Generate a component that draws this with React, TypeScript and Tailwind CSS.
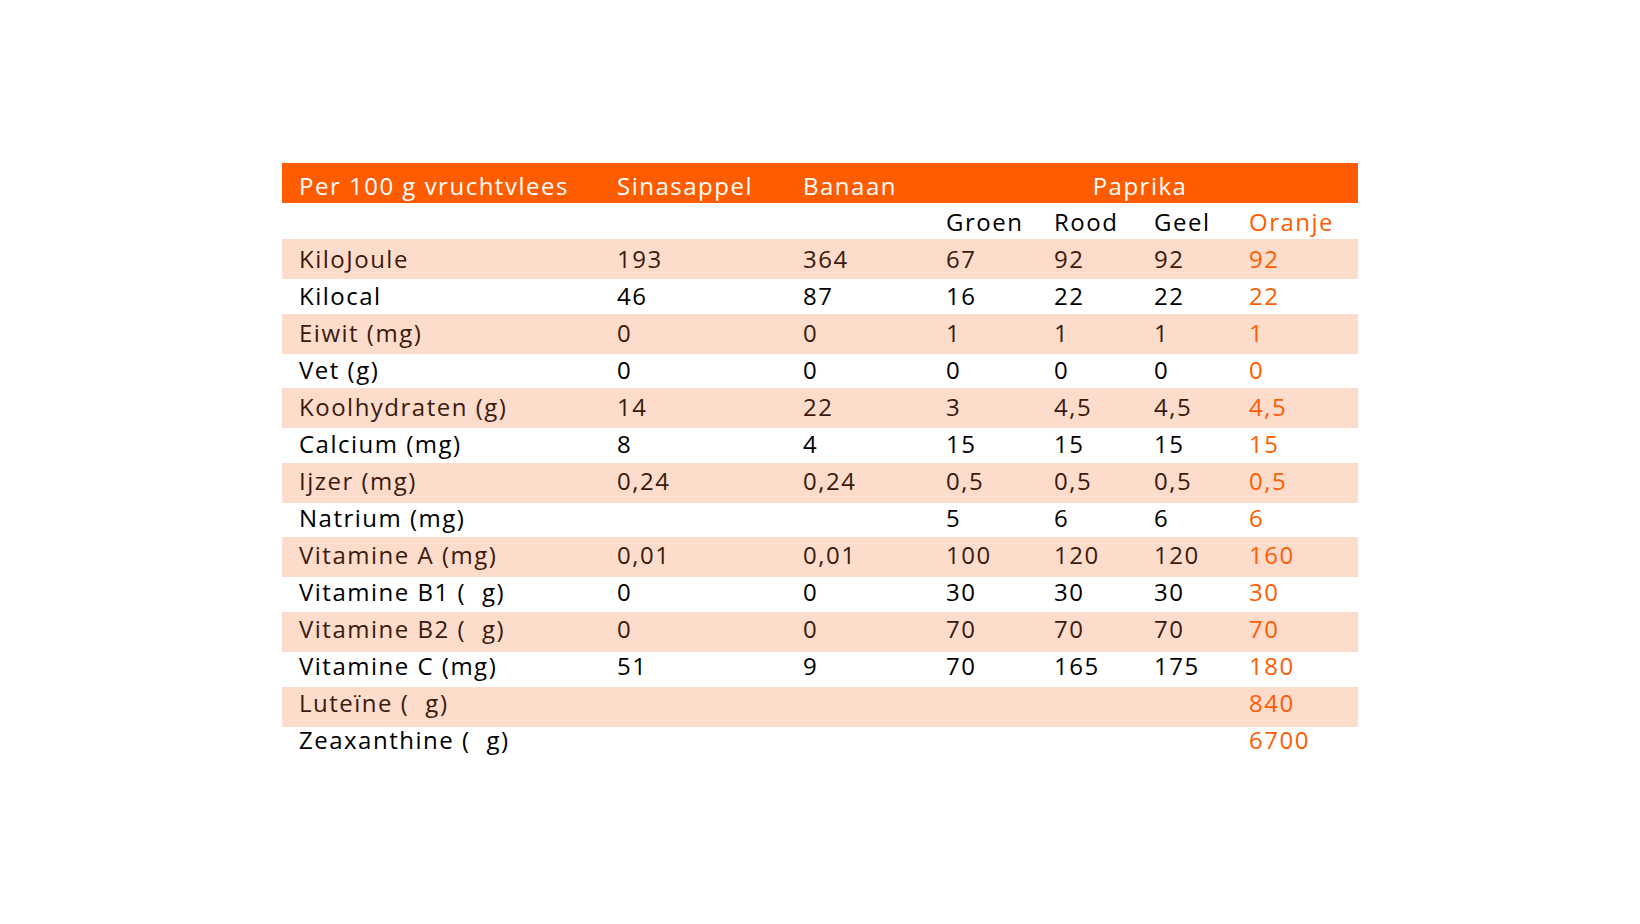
import React from 'react';

type Row = {
    label: React.ReactNode;
    values: string[];
};

const Mu = () => <span className="inline-block w-[16px]" />;

const rows: Row[] = [
    { label: 'KiloJoule', values: ['193', '364', '67', '92', '92', '92'] },
    { label: 'Kilocal', values: ['46', '87', '16', '22', '22', '22'] },
    { label: 'Eiwit (mg)', values: ['0', '0', '1', '1', '1', '1'] },
    { label: 'Vet (g)', values: ['0', '0', '0', '0', '0', '0'] },
    { label: 'Koolhydraten (g)', values: ['14', '22', '3', '4,5', '4,5', '4,5'] },
    { label: 'Calcium (mg)', values: ['8', '4', '15', '15', '15', '15'] },
    { label: 'Ijzer (mg)', values: ['0,24', '0,24', '0,5', '0,5', '0,5', '0,5'] },
    { label: 'Natrium (mg)', values: ['', '', '5', '6', '6', '6'] },
    { label: 'Vitamine A (mg)', values: ['0,01', '0,01', '100', '120', '120', '160'] },
    { label: <>Vitamine B1 (<Mu />g)</>, values: ['0', '0', '30', '30', '30', '30'] },
    { label: <>Vitamine B2 (<Mu />g)</>, values: ['0', '0', '70', '70', '70', '70'] },
    { label: 'Vitamine C (mg)', values: ['51', '9', '70', '165', '175', '180'] },
    { label: <>Luteïne (<Mu />g)</>, values: ['', '', '', '', '', '840'] },
    { label: <>Zeaxanthine (<Mu />g)</>, values: ['', '', '', '', '', '6700'] },
];

// text sits a little higher in its band further down the table
const lift = [
    'pb-0', 'pb-[1px]', 'pb-[1px]', 'pb-[2px]', 'pb-[3px]', 'pb-[3px]', 'pb-[4px]',
    'pb-[4px]', 'pb-[5px]', 'pb-[6px]', 'pb-[6px]', 'pb-[7px]', 'pb-[7px]', 'pb-[8px]',
];

export default function App() {
    return (
        <div
            className="min-h-[924px] bg-white pt-[163px] pl-[282px] text-[24px] leading-none tracking-[1.5px]"
            style={{ fontFamily: '"Open Sans", "Noto Sans", sans-serif' }}
        >
            <table className="w-[1076px] table-fixed border-collapse">
                <colgroup>
                    <col className="w-[319px]" />
                    <col className="w-[186px]" />
                    <col className="w-[143px]" />
                    <col className="w-[108px]" />
                    <col className="w-[100px]" />
                    <col className="w-[95px]" />
                    <col className="w-[125px]" />
                </colgroup>
                <thead>
                    <tr className="h-[40px] bg-[#ff5c00] text-white">
                        <th className="pt-[5px] pl-[17px] text-left font-normal">Per 100 g vruchtvlees</th>
                        <th className="pt-[5px] pl-[16px] text-left font-normal">Sinasappel</th>
                        <th className="pt-[5px] pl-[16px] text-left font-normal">Banaan</th>
                        <th colSpan={4} className="pt-[5px] pr-[8px] text-center font-normal">
                            Paprika
                        </th>
                    </tr>
                    <tr className="h-[36px] text-black">
                        <th />
                        <th />
                        <th />
                        <th className="pt-[2px] pl-[16px] text-left font-normal">Groen</th>
                        <th className="pt-[2px] pl-[16px] text-left font-normal">Rood</th>
                        <th className="pt-[2px] pl-[16px] text-left font-normal">Geel</th>
                        <th className="pt-[2px] pl-[16px] text-left font-normal text-[#ff5c00]">Oranje</th>
                    </tr>
                </thead>
                <tbody>
                    {rows.map((row, i) => {
                        const shaded = i % 2 === 0;
                        return (
                            <tr
                                key={i}
                                className={shaded ? 'h-[40px] bg-[#fddccc] text-[#3b1a0c]' : 'h-[34.6px] bg-white text-black'}
                            >
                                <td className={`pl-[17px] ${lift[i]}`}>{row.label}</td>
                                {row.values.map((v, j) => (
                                    <td
                                        key={j}
                                        className={`pl-[16px] ${lift[i]} ${j === 5 ? 'text-[#ff5c00]' : ''}`}
                                    >
                                        {v}
                                    </td>
                                ))}
                            </tr>
                        );
                    })}
                </tbody>
            </table>
        </div>
    );
}
